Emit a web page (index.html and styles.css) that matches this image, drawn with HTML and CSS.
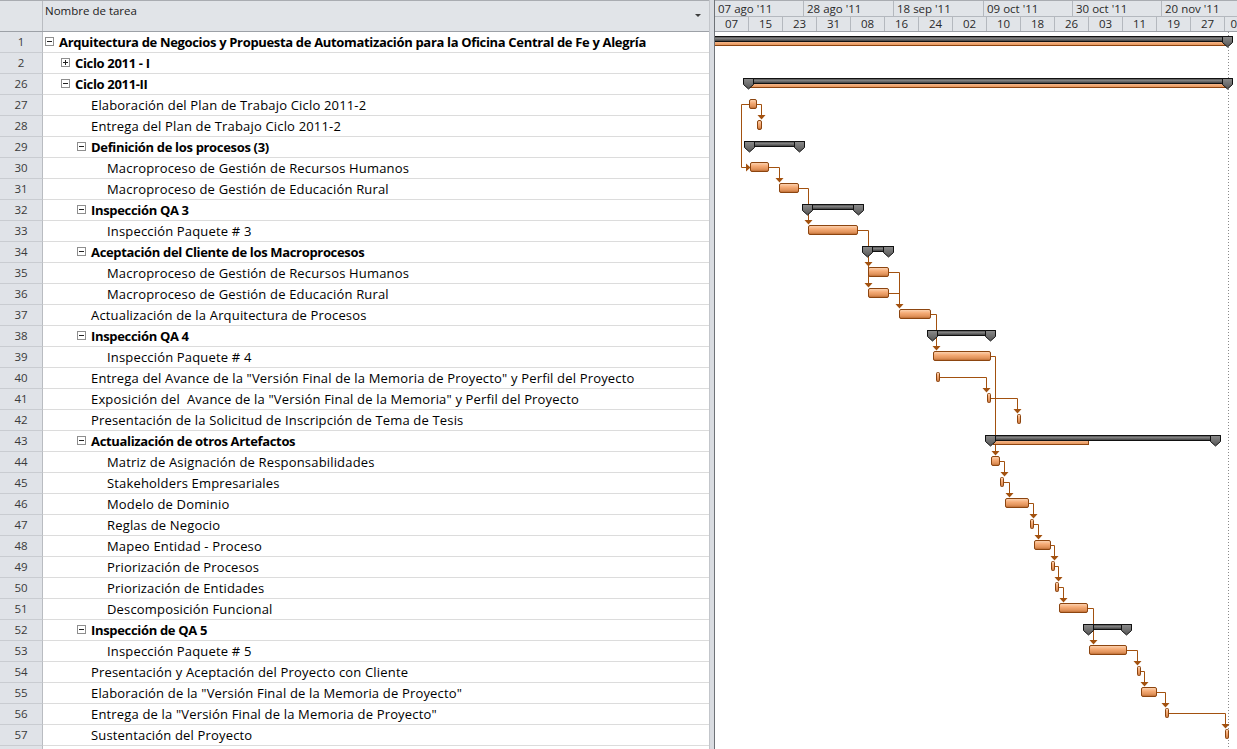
FILE: index.html
```html
<!DOCTYPE html>
<html lang="es">
<head>
<meta charset="utf-8">
<title>Diagrama de Gantt</title>
<link rel="stylesheet" href="styles.css">
</head>
<body>
<div class="app">
  <div class="table-pane">
    <div class="thead">
      <div class="th-num"></div>
      <div class="th-name">Nombre de tarea<span class="dd"></span></div>
    </div>
    <div class="rows">
      <div class="row"><div class="num">1</div><div class="name sum s0"><svg class="tg" width="9" height="9"><rect x=".5" y=".5" width="8" height="8" fill="#fff" stroke="#8e8e8e"/><path d="M2 4.5h5" stroke="#222"/></svg>Arquitectura de Negocios y Propuesta de Automatización para la Oficina Central de Fe y Alegría</div></div>
      <div class="row"><div class="num">2</div><div class="name sum s1"><svg class="tg" width="9" height="9"><rect x=".5" y=".5" width="8" height="8" fill="#fff" stroke="#8e8e8e"/><path d="M2 4.5h5M4.5 2v5" stroke="#222"/></svg>Ciclo 2011 - I</div></div>
      <div class="row"><div class="num">26</div><div class="name sum s1"><svg class="tg" width="9" height="9"><rect x=".5" y=".5" width="8" height="8" fill="#fff" stroke="#8e8e8e"/><path d="M2 4.5h5" stroke="#222"/></svg>Ciclo 2011-II</div></div>
      <div class="row"><div class="num">27</div><div class="name l2">Elaboración del Plan de Trabajo Ciclo 2011-2</div></div>
      <div class="row"><div class="num">28</div><div class="name l2">Entrega del Plan de Trabajo Ciclo 2011-2</div></div>
      <div class="row"><div class="num">29</div><div class="name sum s2"><svg class="tg" width="9" height="9"><rect x=".5" y=".5" width="8" height="8" fill="#fff" stroke="#8e8e8e"/><path d="M2 4.5h5" stroke="#222"/></svg>Definición de los procesos (3)</div></div>
      <div class="row"><div class="num">30</div><div class="name l3">Macroproceso de Gestión de Recursos Humanos</div></div>
      <div class="row"><div class="num">31</div><div class="name l3">Macroproceso de Gestión de Educación Rural</div></div>
      <div class="row"><div class="num">32</div><div class="name sum s2"><svg class="tg" width="9" height="9"><rect x=".5" y=".5" width="8" height="8" fill="#fff" stroke="#8e8e8e"/><path d="M2 4.5h5" stroke="#222"/></svg>Inspección QA 3</div></div>
      <div class="row"><div class="num">33</div><div class="name l3">Inspección Paquete # 3</div></div>
      <div class="row"><div class="num">34</div><div class="name sum s2"><svg class="tg" width="9" height="9"><rect x=".5" y=".5" width="8" height="8" fill="#fff" stroke="#8e8e8e"/><path d="M2 4.5h5" stroke="#222"/></svg>Aceptación del Cliente de los Macroprocesos</div></div>
      <div class="row"><div class="num">35</div><div class="name l3">Macroproceso de Gestión de Recursos Humanos</div></div>
      <div class="row"><div class="num">36</div><div class="name l3">Macroproceso de Gestión de Educación Rural</div></div>
      <div class="row"><div class="num">37</div><div class="name l2">Actualización de la Arquitectura de Procesos</div></div>
      <div class="row"><div class="num">38</div><div class="name sum s2"><svg class="tg" width="9" height="9"><rect x=".5" y=".5" width="8" height="8" fill="#fff" stroke="#8e8e8e"/><path d="M2 4.5h5" stroke="#222"/></svg>Inspección QA 4</div></div>
      <div class="row"><div class="num">39</div><div class="name l3">Inspección Paquete # 4</div></div>
      <div class="row"><div class="num">40</div><div class="name l2">Entrega del Avance de la "Versión Final de la Memoria de Proyecto" y Perfil del Proyecto</div></div>
      <div class="row"><div class="num">41</div><div class="name l2">Exposición del &nbsp;Avance de la "Versión Final de la Memoria" y Perfil del Proyecto</div></div>
      <div class="row"><div class="num">42</div><div class="name l2">Presentación de la Solicitud de Inscripción de Tema de Tesis</div></div>
      <div class="row"><div class="num">43</div><div class="name sum s2"><svg class="tg" width="9" height="9"><rect x=".5" y=".5" width="8" height="8" fill="#fff" stroke="#8e8e8e"/><path d="M2 4.5h5" stroke="#222"/></svg>Actualización de otros Artefactos</div></div>
      <div class="row"><div class="num">44</div><div class="name l3">Matriz de Asignación de Responsabilidades</div></div>
      <div class="row"><div class="num">45</div><div class="name l3">Stakeholders Empresariales</div></div>
      <div class="row"><div class="num">46</div><div class="name l3">Modelo de Dominio</div></div>
      <div class="row"><div class="num">47</div><div class="name l3">Reglas de Negocio</div></div>
      <div class="row"><div class="num">48</div><div class="name l3">Mapeo Entidad - Proceso</div></div>
      <div class="row"><div class="num">49</div><div class="name l3">Priorización de Procesos</div></div>
      <div class="row"><div class="num">50</div><div class="name l3">Priorización de Entidades</div></div>
      <div class="row"><div class="num">51</div><div class="name l3">Descomposición Funcional</div></div>
      <div class="row"><div class="num">52</div><div class="name sum s2"><svg class="tg" width="9" height="9"><rect x=".5" y=".5" width="8" height="8" fill="#fff" stroke="#8e8e8e"/><path d="M2 4.5h5" stroke="#222"/></svg>Inspección de QA 5</div></div>
      <div class="row"><div class="num">53</div><div class="name l3">Inspección Paquete # 5</div></div>
      <div class="row"><div class="num">54</div><div class="name l2">Presentación y Aceptación del Proyecto con Cliente</div></div>
      <div class="row"><div class="num">55</div><div class="name l2">Elaboración de la "Versión Final de la Memoria de Proyecto"</div></div>
      <div class="row"><div class="num">56</div><div class="name l2">Entrega de la "Versión Final de la Memoria de Proyecto"</div></div>
      <div class="row"><div class="num">57</div><div class="name l2">Sustentación del Proyecto</div></div>
      <div class="row filler"><div class="num"></div><div class="name"></div></div>
    </div>
  </div>
  <div class="splitter"></div>
  <div class="chart-pane">
    <div class="timescale">
      <div class="tier tier-top">
        <div class="tcell w89">07 ago '11</div>
        <div class="tcell w90">28 ago '11</div>
        <div class="tcell w90">18 sep '11</div>
        <div class="tcell w89">09 oct '11</div>
        <div class="tcell w89">30 oct '11</div>
        <div class="tcell wrest">20 nov '11</div>
      </div>
      <div class="tier tier-bot">
        <div class="bcell">07</div><div class="bcell">15</div><div class="bcell">23</div><div class="bcell">31</div>
        <div class="bcell">08</div><div class="bcell">16</div><div class="bcell">24</div><div class="bcell">02</div>
        <div class="bcell">10</div><div class="bcell">18</div><div class="bcell">26</div><div class="bcell">03</div>
        <div class="bcell">11</div><div class="bcell">19</div><div class="bcell">27</div><div class="bcell last">0</div>
      </div>
    </div>
    <svg class="gantt" width="522" height="717" viewBox="715 32 522 717">
      <defs>
        <linearGradient id="tgr" x1="0" y1="0" x2="0" y2="1">
          <stop offset="0" stop-color="#fcd6b6"/>
          <stop offset="0.4" stop-color="#f5ab76"/>
          <stop offset="0.75" stop-color="#e0925a"/>
          <stop offset="1" stop-color="#b7662d"/>
        </linearGradient>
        <linearGradient id="sgr" x1="0" y1="0" x2="0" y2="1">
          <stop offset="0" stop-color="#3a3a3a"/>
          <stop offset="0.35" stop-color="#858585"/>
          <stop offset="0.7" stop-color="#5e5e5e"/>
          <stop offset="1" stop-color="#303030"/>
        </linearGradient>
        <linearGradient id="mgr" x1="0" y1="0" x2="0" y2="1">
          <stop offset="0" stop-color="#8c8c8c"/>
          <stop offset="1" stop-color="#555"/>
        </linearGradient>
        <linearGradient id="ogr" x1="0" y1="0" x2="0" y2="1">
          <stop offset="0" stop-color="#f7b88a"/>
          <stop offset="1" stop-color="#e4955c"/>
        </linearGradient>
      </defs>

      <!-- status line -->
      <path d="M1228.5 32V749" stroke="#8a8a8a" stroke-dasharray="1 2"/>

      <!-- links -->
      <g fill="none" stroke="#a2510f">
        <path d="M757 104.5H761.5V115"/>
        <path d="M749 104.5H741.5V167.5H746"/>
        <path d="M769 167.5H779.5V178"/>
        <path d="M799 188.5H808.5V220"/>
        <path d="M858 230.5H868.5V283"/>
        <path d="M889 272.5H899.5V304M889 293.5H899.5"/>
        <path d="M931 314.5H936.5V346"/>
        <path d="M991 356.5H995.5V451"/>
        <path d="M940 377.5H986.5V388"/>
        <path d="M991 398.5H1017.5V409"/>
        <path d="M1000 461.5H1004.5V472"/>
        <path d="M1004 482.5H1009.5V493"/>
        <path d="M1029 503.5H1033.5V514"/>
        <path d="M1034 524.5H1038.5V535"/>
        <path d="M1051 545.5H1054.5V556"/>
        <path d="M1055 566.5H1058.5V577"/>
        <path d="M1059 587.5H1063.5V598"/>
        <path d="M1088 608.5H1093.5V640"/>
        <path d="M1127 650.5H1137.5V661"/>
        <path d="M1140 671.5H1144.5V682"/>
        <path d="M1157 692.5H1165.5V703"/>
        <path d="M1169 713.5H1225.5V724"/>
      </g>
      <g fill="#a2510f">
        <path d="M757.5 115h8l-4 4.5z"/>
        <path d="M746 163.5v8l4.5-4z"/>
        <path d="M775.5 178h8l-4 4.5z"/>
        <path d="M804.5 220h8l-4 4.5z"/>
        <path d="M864.5 262h8l-4 4.5z"/>
        <path d="M864.5 283h8l-4 4.5z"/>
        <path d="M895.5 304h8l-4 4.5z"/>
        <path d="M932.5 346h8l-4 4.5z"/>
        <path d="M991.5 451h8l-4 4.5z"/>
        <path d="M982.5 388h8l-4 4.5z"/>
        <path d="M1013.5 409h8l-4 4.5z"/>
        <path d="M1000.5 472h8l-4 4.5z"/>
        <path d="M1005.5 493h8l-4 4.5z"/>
        <path d="M1029.5 514h8l-4 4.5z"/>
        <path d="M1034.5 535h8l-4 4.5z"/>
        <path d="M1050.5 556h8l-4 4.5z"/>
        <path d="M1054.5 577h8l-4 4.5z"/>
        <path d="M1059.5 598h8l-4 4.5z"/>
        <path d="M1089.5 640h8l-4 4.5z"/>
        <path d="M1133.5 661h8l-4 4.5z"/>
        <path d="M1140.5 682h8l-4 4.5z"/>
        <path d="M1161.5 703h8l-4 4.5z"/>
        <path d="M1221.5 724h8l-4 4.5z"/>
      </g>

      <!-- summary orange strips -->
      <g>
        <rect x="700" y="42" width="528" height="3" fill="url(#ogr)"/>
        <path d="M700 45.5H1228" stroke="#8e4510"/>
        <rect x="750" y="84" width="478" height="3" fill="url(#ogr)"/>
        <path d="M750 87.5H1228" stroke="#8e4510"/>
        <rect x="993" y="441" width="95" height="3" fill="url(#ogr)"/>
        <path d="M993 444.5H1088" stroke="#8e4510"/>
        <path d="M1088.5 441V445" stroke="#8e4510"/>
      </g>

      <!-- summary bars -->
      <g stroke="#111">
        <rect x="700.5" y="36.5" width="532" height="5" fill="url(#sgr)"/>
        <path d="M1222.5 36.5h10v6l-5 4.5-5-4.5z" fill="url(#mgr)"/>

        <rect x="743.5" y="78.5" width="489" height="5" fill="url(#sgr)"/>
        <path d="M743.5 78.5h10v6l-5 4.5-5-4.5z" fill="url(#mgr)"/>
        <path d="M1222.5 78.5h10v6l-5 4.5-5-4.5z" fill="url(#mgr)"/>

        <rect x="744.5" y="141.5" width="60" height="5" fill="url(#sgr)"/>
        <path d="M744.5 141.5h10v6l-5 4.5-5-4.5z" fill="url(#mgr)"/>
        <path d="M794.5 141.5h10v6l-5 4.5-5-4.5z" fill="url(#mgr)"/>

        <rect x="802.5" y="204.5" width="61" height="5" fill="url(#sgr)"/>
        <path d="M802.5 204.5h10v6l-5 4.5-5-4.5z" fill="url(#mgr)"/>
        <path d="M853.5 204.5h10v6l-5 4.5-5-4.5z" fill="url(#mgr)"/>

        <rect x="862.5" y="246.5" width="31" height="5" fill="url(#sgr)"/>
        <path d="M862.5 246.5h10v6l-5 4.5-5-4.5z" fill="url(#mgr)"/>
        <path d="M883.5 246.5h10v6l-5 4.5-5-4.5z" fill="url(#mgr)"/>

        <rect x="927.5" y="330.5" width="68" height="5" fill="url(#sgr)"/>
        <path d="M927.5 330.5h10v6l-5 4.5-5-4.5z" fill="url(#mgr)"/>
        <path d="M985.5 330.5h10v6l-5 4.5-5-4.5z" fill="url(#mgr)"/>

        <rect x="985.5" y="435.5" width="235" height="5" fill="url(#sgr)"/>
        <path d="M985.5 435.5h10v6l-5 4.5-5-4.5z" fill="url(#mgr)"/>
        <path d="M1210.5 435.5h10v6l-5 4.5-5-4.5z" fill="url(#mgr)"/>

        <rect x="1083.5" y="624.5" width="48" height="5" fill="url(#sgr)"/>
        <path d="M1083.5 624.5h10v6l-5 4.5-5-4.5z" fill="url(#mgr)"/>
        <path d="M1121.5 624.5h10v6l-5 4.5-5-4.5z" fill="url(#mgr)"/>
      </g>

      <!-- task bars -->
      <g fill="url(#tgr)" stroke="#8c4510">
        <rect x="749.5" y="99.5" width="7" height="9" rx="1.5"/>
        <rect x="757.5" y="120.5" width="4" height="9" rx="1.5"/>
        <rect x="750.5" y="162.5" width="18" height="9" rx="1.5"/>
        <rect x="779.5" y="183.5" width="19" height="9" rx="1.5"/>
        <rect x="808.5" y="225.5" width="49" height="9" rx="1.5"/>
        <rect x="868.5" y="267.5" width="20" height="9" rx="1.5"/>
        <rect x="868.5" y="288.5" width="20" height="9" rx="1.5"/>
        <rect x="899.5" y="309.5" width="31" height="9" rx="1.5"/>
        <rect x="933.5" y="351.5" width="57" height="9" rx="1.5"/>
        <rect x="936.5" y="372.5" width="3" height="9" rx="1"/>
        <rect x="987.5" y="393.5" width="3" height="9" rx="1"/>
        <rect x="1017.5" y="414.5" width="3" height="9" rx="1"/>
        <rect x="991.5" y="456.5" width="8" height="9" rx="1.5"/>
        <rect x="1000.5" y="477.5" width="3" height="9" rx="1"/>
        <rect x="1005.5" y="498.5" width="23" height="9" rx="1.5"/>
        <rect x="1030.5" y="519.5" width="3" height="9" rx="1"/>
        <rect x="1034.5" y="540.5" width="16" height="9" rx="1.5"/>
        <rect x="1051.5" y="561.5" width="3" height="9" rx="1"/>
        <rect x="1055.5" y="582.5" width="3" height="9" rx="1"/>
        <rect x="1059.5" y="603.5" width="28" height="9" rx="1.5"/>
        <rect x="1089.5" y="645.5" width="37" height="9" rx="1.5"/>
        <rect x="1137.5" y="666.5" width="3" height="9" rx="1"/>
        <rect x="1141.5" y="687.5" width="15" height="9" rx="1.5"/>
        <rect x="1165.5" y="708.5" width="3" height="9" rx="1"/>
        <rect x="1225.5" y="729.5" width="3" height="9" rx="1"/>
      </g>
    </svg>
  </div>
</div>
</body>
</html>
```
FILE: styles.css
```css
html, body {
  margin: 0;
  padding: 0;
  width: 1237px;
  height: 749px;
  overflow: hidden;
  background: #fff;
}
body {
  font-family: "Open Sans", "Noto Sans", sans-serif;
  font-size: 11.5px;
  color: #000;
}
.app {
  display: flex;
  width: 1237px;
  height: 749px;
}

/* ---------- table pane ---------- */
.table-pane {
  width: 710px;
  flex: none;
  box-sizing: border-box;
  border-right: 1px solid #c3c6cb;
  display: flex;
  flex-direction: column;
  overflow: hidden;
}
.thead {
  height: 32px;
  flex: none;
  display: flex;
  box-sizing: border-box;
  border-top: 1px solid #a9acb1;
  border-bottom: 1px solid #9da1a7;
  background: #e1e4e8;
}
.th-num {
  width: 43px;
  box-sizing: border-box;
  border-right: 1px solid #b9bcc1;
}
.th-name {
  flex: 1;
  position: relative;
  padding: 2px 0 0 2px;
  line-height: 16px;
  color: #222;
}
.dd {
  position: absolute;
  right: 8px;
  top: 13px;
  width: 0;
  height: 0;
  border-left: 3px solid transparent;
  border-right: 3px solid transparent;
  border-top: 3px solid #3d3d3d;
}
.rows {
  flex: 1;
  display: flex;
  flex-direction: column;
}
.row {
  display: flex;
  height: 21px;
  flex: none;
}
.row.filler {
  flex: 1;
}
.num {
  width: 43px;
  flex: none;
  box-sizing: border-box;
  background: #e0e3e8;
  border-right: 1px solid #b9bcc1;
  border-bottom: 1px solid #c9ccd1;
  text-align: center;
  line-height: 20px;
  color: #3a3a3a;
}
.name {
  flex: 1;
  box-sizing: border-box;
  border-bottom: 1px solid #dcdcdc;
  white-space: nowrap;
  overflow: hidden;
  display: flex;
  align-items: center;
  line-height: 20px;
  font-size: 13px;
  letter-spacing: 0.17px;
}
.row.filler .num,
.row.filler .name {
  border-bottom: 0;
}
.sum {
  font-weight: 700;
  letter-spacing: -0.33px;
}
.tg {
  flex: none;
  margin-right: 5px;
  margin-top: -1px;
}
.s0 { padding-left: 2px; }
.s1 { padding-left: 18px; }
.s2 { padding-left: 34px; }
.l2 { padding-left: 48px; }
.l3 { padding-left: 64px; }

/* ---------- splitter ---------- */
.splitter {
  width: 5px;
  flex: none;
  box-sizing: border-box;
  background: #d9dce1;
  border-right: 1px solid #6e7277;
}

/* ---------- chart pane ---------- */
.chart-pane {
  width: 522px;
  flex: none;
  display: flex;
  flex-direction: column;
  overflow: hidden;
}
.timescale {
  height: 32px;
  flex: none;
  box-sizing: border-box;
  border-top: 1px solid #a9acb1;
  border-bottom: 1px solid #9da1a7;
  background: #e1e4e8;
  color: #2a2a2a;
}
.tier {
  display: flex;
  white-space: nowrap;
  overflow: hidden;
}
.tier-top {
  height: 16px;
  box-sizing: border-box;
  border-bottom: 1px solid #b4b8be;
}
.tier-bot {
  height: 14px;
}
.tcell {
  flex: none;
  box-sizing: border-box;
  border-right: 1px solid #b4b8be;
  padding-left: 3px;
  line-height: 15px;
  overflow: hidden;
}
.w89 { width: 89px; }
.w90 { width: 90px; }
.wrest { width: 76px; border-right: 0; }
.bcell {
  flex: none;
  width: 34px;
  box-sizing: border-box;
  border-right: 1px solid #b4b8be;
  text-align: center;
  line-height: 14px;
  overflow: hidden;
}
.bcell.last {
  width: 12px;
  border-right: 0;
  text-align: right;
}
.gantt {
  display: block;
  flex: none;
}
```
